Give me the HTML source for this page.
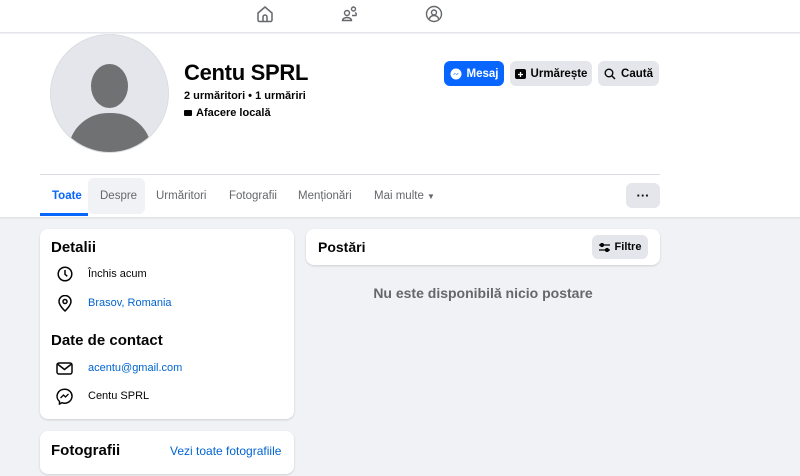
<!DOCTYPE html>
<html><head><meta charset="utf-8"><style>
*{margin:0;padding:0;box-sizing:border-box}
body{width:800px;height:476px;overflow:hidden;background:#f0f2f5;font-family:"Liberation Sans",sans-serif;color:#050505;position:relative}
.a{position:absolute}
.top{left:0;top:0;width:800px;height:33px;background:#fff;border-bottom:1px solid #e4e6eb}
.prof{left:0;top:34px;width:800px;height:183px;background:#fff;box-shadow:0 1px 2px rgba(0,0,0,.1)}
.btn{height:25px;border-radius:6px;font-size:11.5px;font-weight:bold;display:flex;align-items:center;justify-content:center;gap:5px;background:#e4e6eb}
.card{background:#fff;border-radius:8px;box-shadow:0 1px 2px rgba(0,0,0,.15)}
.tab{font-size:11.5px;color:#65676b;top:190px}
.it{font-size:11px;left:88px}
</style></head><body>
<div class="a top">
<svg class="a" style="left:256px;top:5px" width="18" height="18" viewBox="0 0 18 18" fill="none" stroke="#65676b" stroke-width="1.5"><path d="M2 8L9 2l7 6v7a1.5 1.5 0 0 1-1.5 1.5h-11A1.5 1.5 0 0 1 2 15z"/><path d="M7 16.5V12a2 2 0 0 1 4 0v4.5"/></svg>
<svg class="a" style="left:341px;top:5px" width="18" height="18" viewBox="0 0 18 18" fill="none" stroke="#65676b" stroke-width="1.4"><circle cx="6" cy="8" r="2.5"/><path d="M1.5 15.5a4.5 3 0 0 1 9 0z"/><circle cx="12.5" cy="4" r="2"/><path d="M11 10.5h4a2 2 0 0 0-1-3"/></svg>
<svg class="a" style="left:425px;top:5px" width="18" height="18" viewBox="0 0 18 18" fill="none" stroke="#65676b" stroke-width="1.4"><circle cx="9" cy="9" r="7.5"/><circle cx="9" cy="7.5" r="2.5"/><path d="M4.5 14a4.5 3.5 0 0 1 9 0"/></svg>
</div>
<div class="a prof"></div>
<div class="a" style="left:50px;top:34px;width:119px;height:119px;border-radius:50%;background:#e4e6eb;overflow:hidden;border:1px solid #dadde1">
<div class="a" style="left:40px;top:29px;width:37px;height:44px;border-radius:50%;background:#707173"></div>
<div class="a" style="left:17px;top:78px;width:84px;height:60px;border-radius:40px 40px 0 0;background:#707173"></div>
</div>
<div class="a" style="left:184px;top:60px;font-size:22px;font-weight:bold;letter-spacing:-0.3px">Centu SPRL</div>
<div class="a" style="left:184px;top:90px;font-size:11px;font-weight:bold">2 urmăritori • 1 urmăriri</div>
<div class="a" style="left:184px;top:107px;font-size:11px;font-weight:bold"><span style="display:inline-block;width:8px;height:6px;background:#050505;border-radius:1px;margin-right:4px"></span>Afacere locală</div>
<div class="a btn" style="left:444px;top:61px;width:60px;background:#0866ff;color:#fff"><svg width="12" height="12" viewBox="0 0 12 12"><circle cx="6" cy="6" r="5.5" fill="#fff"/><path d="M2.8 7.2L5 5l1.3 1.2L9 4.8 6.8 7 5.5 5.8z" fill="#0866ff"/></svg>Mesaj</div>
<div class="a btn" style="left:510px;top:61px;width:82px"><svg width="11" height="11" viewBox="0 0 11 11"><rect x="0" y="1" width="11" height="10" rx="2" fill="#050505"/><path d="M5.5 4v5M3 6.5h5" stroke="#fff" stroke-width="1.3"/></svg>Urmărește</div>
<div class="a btn" style="left:598px;top:61px;width:61px"><svg width="12" height="12" viewBox="0 0 12 12" fill="none" stroke="#050505" stroke-width="1.4"><circle cx="5" cy="5" r="3.8"/><path d="M8 8l3 3"/></svg>Caută</div>
<div class="a" style="left:40px;top:174px;width:620px;height:1px;background:#dadde1"></div>
<div class="a" style="left:88px;top:178px;width:57px;height:36px;background:#f0f2f5;border-radius:6px"></div>
<div class="a tab" style="left:52px;color:#0866ff;font-weight:bold">Toate</div>
<div class="a" style="left:40px;top:213px;width:48px;height:3px;background:#0866ff"></div>
<div class="a tab" style="left:100px">Despre</div>
<div class="a tab" style="left:156px">Urmăritori</div>
<div class="a tab" style="left:229px">Fotografii</div>
<div class="a tab" style="left:298px">Menționări</div>
<div class="a tab" style="left:374px">Mai multe <span style="font-size:8px">▼</span></div>
<div class="a btn" style="left:626px;top:183px;width:34px;font-size:13px;line-height:1">···</div>

<div class="a card" style="left:40px;top:229px;width:254px;height:190px"></div>
<div class="a" style="left:51px;top:239px;font-size:15px;font-weight:bold">Detalii</div>
<svg class="a" style="left:57px;top:266px" width="16" height="16" viewBox="0 0 16 16" fill="none" stroke="#050505" stroke-width="1.5"><circle cx="8" cy="8" r="6.8"/><path d="M8 4v4.3l2.3 2"/></svg>
<div class="a it" style="top:268px">Închis acum</div>
<svg class="a" style="left:58px;top:295px" width="14" height="17" viewBox="0 0 14 17" fill="none" stroke="#050505" stroke-width="1.5"><path d="M7 16s6-5.5 6-9.5a6 6 0 0 0-12 0C1 10.5 7 16 7 16z"/><circle cx="7" cy="6.5" r="2"/></svg>
<div class="a it" style="top:297px;color:#0064d1">Brasov, Romania</div>
<div class="a" style="left:51px;top:332px;font-size:15px;font-weight:bold">Date de contact</div>
<svg class="a" style="left:56px;top:362px" width="17" height="13" viewBox="0 0 17 13" fill="none" stroke="#050505" stroke-width="1.5"><rect x="1" y="1" width="15" height="11" rx="2"/><path d="M1.5 2l7 5.5 7-5.5"/></svg>
<div class="a it" style="top:362px;color:#0064d1">acentu@gmail.com</div>
<svg class="a" style="left:56px;top:388px" width="17" height="17" viewBox="0 0 17 17" fill="none" stroke="#050505" stroke-width="1.5"><path d="M8.5 1.2a7.3 7 0 0 0-5 12.2v2.6l2.5-1.3a7.3 7 0 1 0 2.5-13.5z"/><path d="M4.5 10l3-3 2 2 3-3" stroke-width="1.3"/></svg>
<div class="a it" style="top:390px">Centu SPRL</div>

<div class="a card" style="left:40px;top:431px;width:254px;height:43px"></div>
<div class="a" style="left:51px;top:442px;font-size:15px;font-weight:bold">Fotografii</div>
<div class="a" style="left:170px;top:444px;font-size:12px;color:#0064d1">Vezi toate fotografiile</div>

<div class="a card" style="left:306px;top:229px;width:354px;height:36px"></div>
<div class="a" style="left:318px;top:239px;font-size:14px;font-weight:bold">Postări</div>
<div class="a btn" style="left:592px;top:235px;width:56px;height:24px;font-size:11px"><svg width="11" height="9" viewBox="0 0 11 9" stroke="#050505" stroke-width="1.3"><path d="M0 2h11M0 7h11"/><circle cx="3" cy="2" r="1.5" fill="#050505"/><circle cx="8" cy="7" r="1.5" fill="#050505"/></svg>Filtre</div>
<div class="a" style="left:306px;top:285px;width:354px;text-align:center;font-size:14px;font-weight:bold;color:#65676b">Nu este disponibilă nicio postare</div>
</body></html>
